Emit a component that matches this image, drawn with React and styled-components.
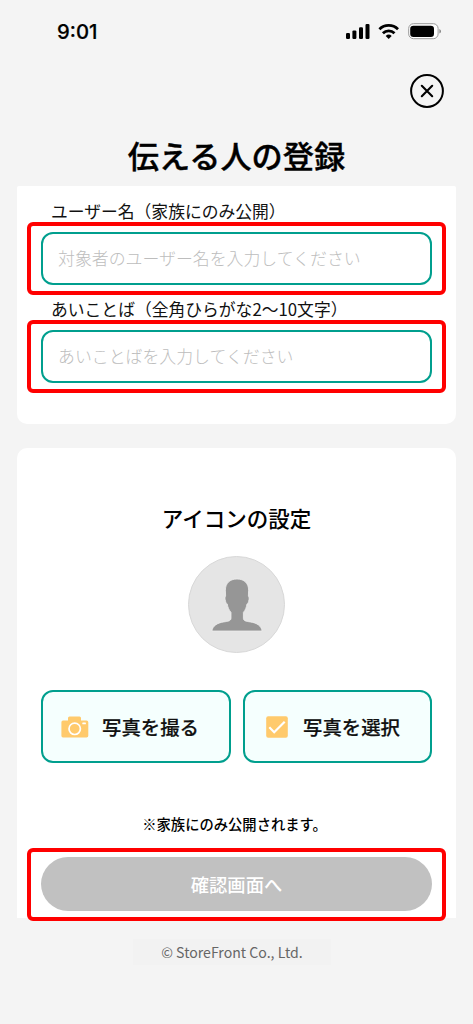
import { useState } from 'react';
import styled, { createGlobalStyle } from 'styled-components';

export default function App() {

    const [userName, setUserName] = useState('');
    const [password, setPassword] = useState('');

    return (
        <>
            <GlobalStyle />
            <Screen>
                <StatusBar>
                    <Time>9:01</Time>
                    <StatusIcons />
                </StatusBar>
                <Header>
                    <CloseButton aria-label='閉じる'>
                        <svg width="34" height="34" viewBox="0 0 34 34" fill="none" stroke="#000">
                            <circle cx="17" cy="17" r="15.9" strokeWidth="2" />
                            <path d="M11.8 11.8 22.2 22.2M22.2 11.8 11.8 22.2" strokeWidth="2.1" strokeLinecap="round" />
                        </svg>
                    </CloseButton>
                    <Title>伝える人の登録</Title>
                </Header>

                <FormCard>
                    <Label>ユーザー名（家族にのみ公開）</Label>
                    <Highlight>
                        <Input type="text"
                            value={userName}
                            placeholder='対象者のユーザー名を入力してください'
                            onChange={(e) => { setUserName(e.target.value) }} />
                    </Highlight>
                    <Label>あいことば（全角ひらがな2〜10文字）</Label>
                    <Highlight>
                        <Input type="text"
                            value={password}
                            placeholder='あいことばを入力してください'
                            onChange={(e) => { setPassword(e.target.value) }} />
                    </Highlight>
                </FormCard>

                <IconCard>
                    <SubTitle>アイコンの設定</SubTitle>
                    <Avatar>
                        <Person />
                    </Avatar>
                    <PhotoButtons>
                        <PhotoButton $gap="13px" $left="18px">
                            <Camera />
                            写真を撮る
                        </PhotoButton>
                        <PhotoButton $gap="15.5px" $left="21px">
                            <CheckSquare />
                            写真を選択
                        </PhotoButton>
                    </PhotoButtons>
                    <Note>※家族にのみ公開されます。</Note>
                    <Highlight>
                        <SubmitButton>確認画面へ</SubmitButton>
                    </Highlight>
                </IconCard>

                <Footer>© StoreFront Co., Ltd.</Footer>
            </Screen>
        </>
    )
}

function StatusIcons() {
    return (
        <svg width="97" height="18" viewBox="345 22 97 18">
            <rect x="346" y="33" width="4" height="6" rx="1.2" />
            <rect x="352.4" y="30.4" width="4" height="8.6" rx="1.2" />
            <rect x="359" y="27.2" width="4" height="11.8" rx="1.2" />
            <rect x="365.5" y="23.9" width="4" height="15.1" rx="1.2" />
            <g fill="none" stroke="#000" strokeWidth="2.8">
                <path d="M379.4 29.2a13.4 13.4 0 0 1 18.6 0" />
                <path d="M382.9 33.2a8.3 8.3 0 0 1 11.6 0" />
            </g>
            <path d="M385.7 35.9a4.5 4.5 0 0 1 6 0L388.7 38.9z" />
            <rect x="408.7" y="23.7" width="29.4" height="15" rx="4.8" fill="#fff" stroke="#999" />
            <rect x="410.2" y="25.7" width="23.8" height="11.2" rx="3.2" />
            <path d="M439.4 29v4.6q1.6-.7 1.6-2.3t-1.6-2.3z" fill="#888" />
        </svg>
    )
}

function Person() {
    return (
        <svg width="52" height="54" viewBox="0 0 52 54">
            <path d="M26 1C18.6 1 14.3 5.6 14.4 12.3L14.6 18.2C13.6 18.8 13.9 21 14.6 23.4C15 25 15.6 25.6 16.2 25.9C16.8 29.4 18 32 20 34.4V40.4C19.8 43 16.8 43.4 12.8 43.9C6 44.8 1.2 48.4 1 53H51C50.8 48.4 46 44.8 39.2 43.9C35.2 43.4 32.6 43 32.4 40.4V34.4C34.4 32 35.4 29.4 36 25.9C36.8 25.6 37.2 25 37.6 23.4C38.3 21 38.4 18.8 37.4 18.2L37.6 12.3C37.7 5.6 33.4 1 26 1Z" fill="#969696" stroke="#ededed" strokeWidth="0.8" />
        </svg>
    )
}

function Camera() {
    return (
        <svg width="28" height="22" viewBox="0 0 28 22">
            <path d="M2 4.5H7V2Q7 .5 8.5 .5H18.5Q20 .5 20 2V4.5H25.5Q27.3 4.5 27.3 6.3V19.7Q27.3 21.5 25.5 21.5H2Q.4 21.5 .4 19.7V6.2Q.4 4.5 2 4.5Z" fill="#ffca6c" />
            <circle cx="13.7" cy="12.8" r="5.7" fill="none" stroke="#fff" strokeWidth="1.7" />
            <rect x="21.3" y="6.5" width="3.6" height="1.8" rx=".6" fill="#fff" />
        </svg>
    )
}

function CheckSquare() {
    return (
        <svg width="22" height="22" viewBox="0 0 22 22">
            <rect x=".2" y=".2" width="21.6" height="21.6" rx="2" fill="#ffca6c" />
            <path d="M3.3 11.3 8.2 16.2 18.7 5.8" fill="none" stroke="#fff" strokeWidth="2.2" />
        </svg>
    )
}


const GlobalStyle = createGlobalStyle`
* { box-sizing:border-box; }
body {
    margin:0;
    background-color:#f4f4f4;
    color:#111;
    font-family:"Noto Sans CJK JP", sans-serif;
}
button, input { font-family:inherit; }
svg { display:block; flex-shrink:0; }
`

const Screen = styled.div`
width:473px;
height:1024px;
padding:0 17px;
display:flex;
flex-direction:column;
overflow:hidden;
`

const StatusBar = styled.div`
display:flex;
justify-content:space-between;
align-items:flex-start;
height:74px;
padding:22px 14px 0 40px;
`

const Time = styled.span`
font-family:Inter, sans-serif;
font-size:20.3px;
font-weight:500;
line-height:20px;
color:#000;
-webkit-text-stroke:0.2px #000;
`

const Header = styled.header`
display:flex;
flex-direction:column;
height:111.5px;
`

const CloseButton = styled.button`
align-self:flex-end;
margin-right:12px;
padding:0;
border:none;
background:none;
cursor:pointer;
`

const Title = styled.h1`
margin:24px 0 0;
font-size:31.2px;
font-weight:500;
line-height:46px;
text-align:center;
color:#000;
-webkit-text-stroke:0.4px #000;
`

const Card = styled.section`
display:flex;
flex-direction:column;
flex-shrink:0;
padding:0 10px;
background-color:#fff;
`

const FormCard = styled(Card)`
height:238px;
padding-top:11.5px;
border-radius:2px 2px 10px 10px;
`

const IconCard = styled(Card)`
height:470px;
margin-top:24.5px;
padding-top:54px;
border-radius:10px 10px 0 0;
`

const Label = styled.label`
height:25px;
padding-left:24px;
font-size:16.8px;
line-height:28px;
white-space:nowrap;
`

const Highlight = styled.div`
flex-shrink:0;
height:73px;
padding:6px 10px;
border:4px solid #ff0000;
border-radius:6px;
`

const Input = styled.input`
width:391px;
height:53px;
padding:0 15px 2px;
border:2.4px solid #009f8e;
border-radius:12px;
background-color:#fff;
font-size:16.9px;
outline:none;

&::placeholder {
    color:#bdbdbd;
    font-weight:300;
    opacity:1;
}
`

const SubTitle = styled.h2`
margin:0;
font-size:21.5px;
font-weight:500;
line-height:32px;
text-align:center;
color:#000;
`

const Avatar = styled.div`
display:flex;
flex-shrink:0;
justify-content:center;
align-self:center;
width:97px;
height:97px;
margin-top:21.5px;
padding-top:21px;
border:1px solid #d8d8d8;
border-radius:50%;
background-color:#e5e5e5;
`

const PhotoButtons = styled.div`
display:grid;
grid-template-columns:1fr 1fr;
gap:12px;
margin-top:37.5px;
padding:0 14px;
`

const PhotoButton = styled.button`
display:flex;
align-items:center;
gap:${({ $gap }) => $gap};
height:73px;
padding:0 0 0 ${({ $left }) => $left};
border:2.4px solid #009f8e;
border-radius:12px;
background-color:#f5fffe;
color:#111;
font-size:19.4px;
font-weight:500;
white-space:nowrap;
cursor:pointer;
-webkit-text-stroke:0.2px #111;
`

const Note = styled.p`
margin:50px 0 13.5px;
padding-right:4px;
font-size:14.3px;
font-weight:500;
line-height:21px;
text-align:center;
color:#000;
`

const SubmitButton = styled.button`
width:391px;
height:54px;
margin-top:-0.5px;
border:none;
border-radius:27px;
background-color:#c1c1c1;
color:#fff;
font-size:18.3px;
font-weight:500;
`

const Footer = styled.footer`
align-self:center;
width:198px;
margin:21px 0 0 -9px;
background-color:#f2f2f2;
color:#666;
font-size:14.1px;
line-height:26px;
text-align:center;
`
